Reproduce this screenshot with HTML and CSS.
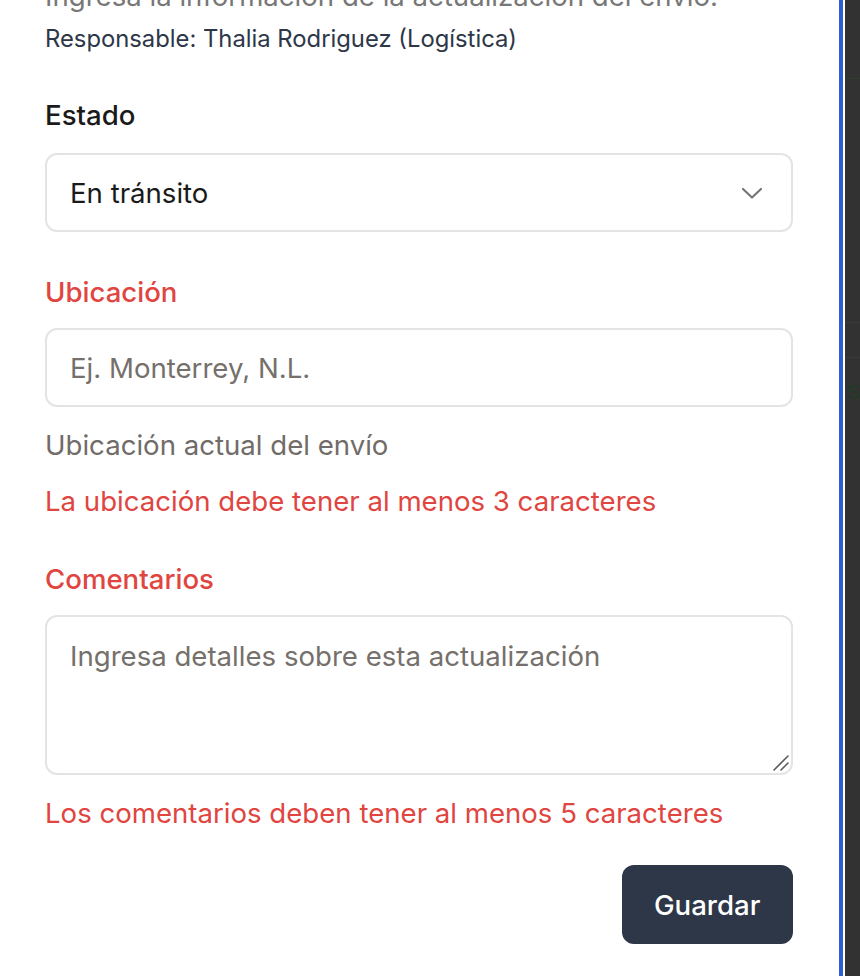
FILE: index.html
```html
<!DOCTYPE html>
<html lang="es">
<head>
<meta charset="utf-8">
<title>Actualizar envío</title>
<link rel="stylesheet" href="styles.css">
</head>
<body>
<div class="page">
  <div class="panel">
    <p class="intro">Ingresa la información de la actualización del envío.</p>
    <p class="owner">Responsable: Thalia Rodriguez (Logística)</p>

    <div class="field">
      <label class="label" for="estado">Estado</label>
      <div class="control-wrap">
        <select id="estado" class="control select">
          <option>En tránsito</option>
        </select>
        <svg class="chevron" width="22" height="12" viewBox="0 0 22 12"><polyline points="2,2 11,10.5 20,2" fill="none" stroke="#777" stroke-width="2.2" stroke-linecap="round" stroke-linejoin="round"/></svg>
      </div>
    </div>

    <div class="field">
      <label class="label invalid" for="ubicacion">Ubicación</label>
      <input id="ubicacion" class="control" type="text" placeholder="Ej. Monterrey, N.L.">
      <p class="helper">Ubicación actual del envío</p>
      <p class="error">La ubicación debe tener al menos 3 caracteres</p>
    </div>

    <div class="field">
      <label class="label invalid" for="comentarios">Comentarios</label>
      <div class="control-wrap">
        <textarea id="comentarios" class="control area" placeholder="Ingresa detalles sobre esta actualización"></textarea>
        <svg class="grip" width="18" height="18" viewBox="0 0 18 18"><line x1="2" y1="16" x2="16" y2="2" stroke="#5a5a5a" stroke-width="1.6" stroke-linecap="round"/><line x1="9" y1="16" x2="16" y2="9" stroke="#5a5a5a" stroke-width="1.6" stroke-linecap="round"/></svg>
      </div>
      <p class="error">Los comentarios deben tener al menos 5 caracteres</p>
    </div>

    <div class="actions">
      <button class="btn" type="button">Guardar</button>
    </div>
  </div>
  <div class="edge"></div>
  <div class="backdrop">
    <div class="bd-line first"></div>
    <div class="bd-line second"></div>
    <div class="bd-line third"></div>
    <span class="bd-letter">S</span>
  </div>
</div>
</body>
</html>
```

FILE: styles.css
```css
html, body {
  margin: 0;
  padding: 0;
  height: 100%;
  overflow: hidden;
  background: #ffffff;
  font-family: Inter, "Noto Sans", "Liberation Sans", sans-serif;
}

.page {
  display: flex;
  height: 976px;
}

.panel {
  width: 840px;
  box-sizing: border-box;
  padding: 0 46px 0 45px;
  background: #ffffff;
  white-space: nowrap;
}

.edge {
  width: 4px;
  background: #2b60d4;
  margin-right: 2px;
}

.backdrop {
  flex: 1;
  background: #323232;
  display: flex;
  flex-direction: column;
}

.bd-line {
  height: 1px;
  background: #2c3e30;
}
.bd-line.first { margin-top: 78px; }
.bd-line.second { margin-top: 243px; background: #363d37; }
.bd-line.third { margin-top: 34px; background: #363d37; }

.bd-letter {
  margin-top: 22px;
  margin-left: 2px;
  font-size: 20px;
  line-height: 24px;
  color: #1f3a25;
  font-family: "Liberation Sans", sans-serif;
}

.intro {
  margin: -22px 0 0;
  font-size: 27.6px;
  line-height: 36px;
  color: #777777;
}

.owner {
  margin: 10px 0 0;
  font-size: 23.8px;
  line-height: 30px;
  color: #2d3748;
}

.field {
  margin-top: 42px;
  display: flex;
  flex-direction: column;
}

.field:first-of-type {
  margin-top: 43px;
}

.label {
  font-size: 27.6px;
  line-height: 36px;
  font-weight: 500;
  color: #1a1a1a;
  margin-bottom: 20px;
}

.label.invalid {
  color: #e0453f;
  margin-bottom: 18px;
}

.control-wrap {
  position: relative;
}

.control {
  display: block;
  width: 100%;
  box-sizing: border-box;
  height: 79px;
  border: 2px solid #e4e4e4;
  border-radius: 12px;
  background: #ffffff;
  padding: 0 23px;
  font-family: inherit;
  font-size: 27.6px;
  color: #1a1a1a;
  outline: none;
}

.control::placeholder {
  color: #75706b;
  opacity: 1;
}

.select {
  appearance: none;
  -webkit-appearance: none;
}

.chevron {
  position: absolute;
  right: 30px;
  top: 34px;
}

.area {
  height: 160px;
  padding: 21px 23px;
  line-height: 36px;
  resize: none;
}

.grip {
  position: absolute;
  right: 3px;
  bottom: 3px;
  pointer-events: none;
}

.helper {
  margin: 20px 0 0;
  font-size: 27.6px;
  line-height: 36px;
  color: #716c68;
}

.error {
  margin: 20px 0 0;
  font-size: 27.6px;
  line-height: 36px;
  color: #e0453f;
}

.actions {
  display: flex;
  justify-content: flex-end;
  margin-top: 34px;
}

.btn {
  height: 79px;
  width: 171px;
  border: none;
  border-radius: 12px;
  background: #2d3748;
  color: #ffffff;
  font-family: inherit;
  font-size: 27.6px;
  font-weight: 500;
}
```
